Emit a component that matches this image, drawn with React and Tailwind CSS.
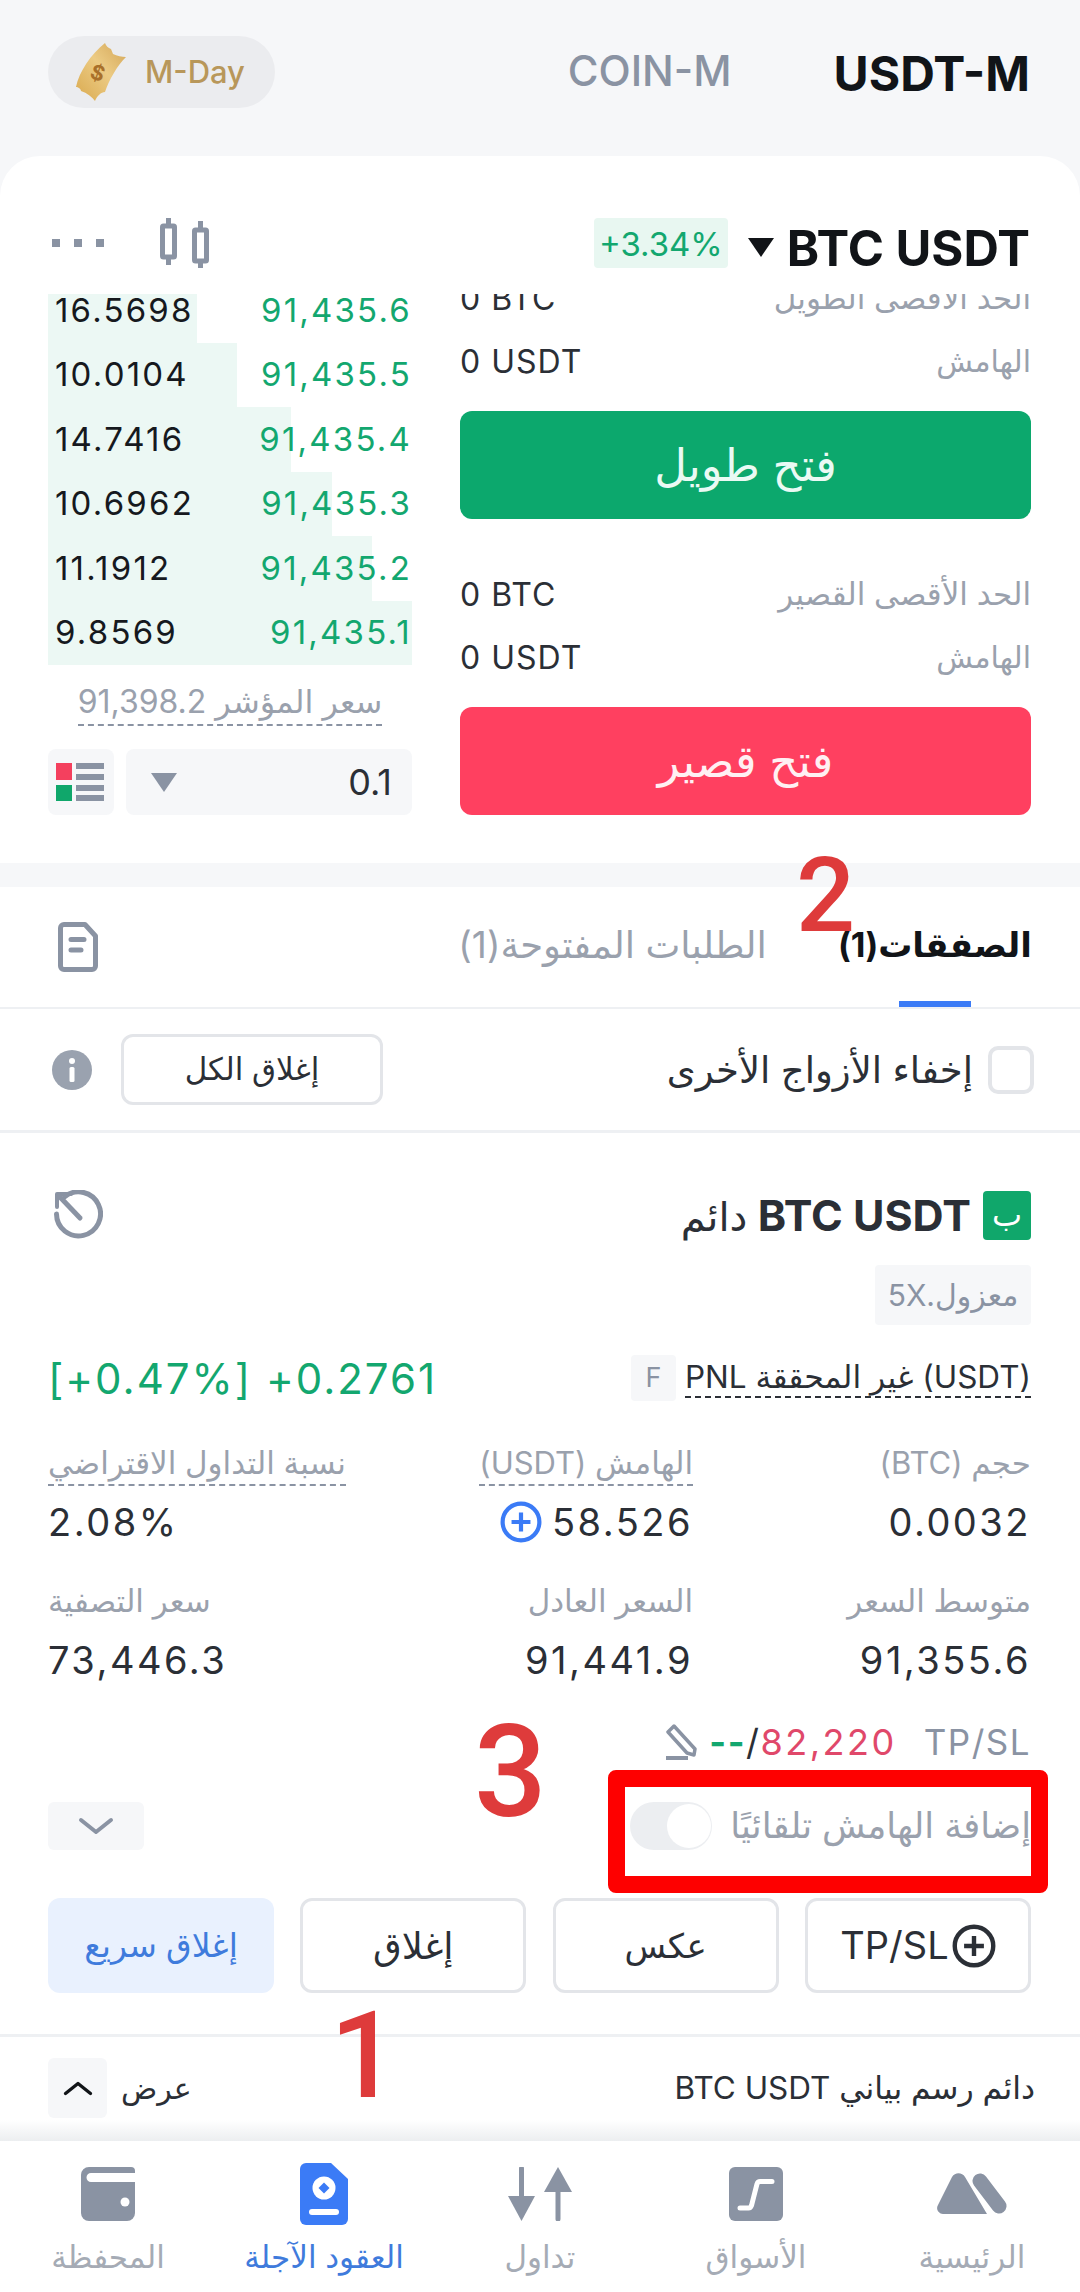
import React from "react";

const GRAY = "#8a93a3";

const asks = [
  { qty: "16.5698", price: "91,435.6", bar: 149 },
  { qty: "10.0104", price: "91,435.5", bar: 189 },
  { qty: "14.7416", price: "91,435.4", bar: 243 },
  { qty: "10.6962", price: "91,435.3", bar: 284 },
  { qty: "11.1912", price: "91,435.2", bar: 324 },
  { qty: "9.8569", price: "91,435.1", bar: 364 },
];

const Ticket = () => (
  <svg width="52" height="60" viewBox="0 0 52 60" className="shrink-0">
    <defs>
      <linearGradient id="gold" x1="0" y1="1" x2="1" y2="0">
        <stop offset="0" stopColor="#d9a94e" />
        <stop offset="0.55" stopColor="#eccb84" />
        <stop offset="1" stopColor="#d3a556" />
      </linearGradient>
    </defs>
    <path d="M30 1 C31 4 33 6 36 7 L38 12 C42 14 47 15 51 15 C42 24 34 38 30 50 C26 50 22 54 20 59 C17 55 12 51 6 49 C6 47 3 45 1 45 C4 30 16 12 30 1Z" fill="url(#gold)" />
    <text x="16" y="38" fontSize="21" fontWeight="700" fill="#a9702a" transform="rotate(20 22 30)" fontFamily="Inter">$</text>
  </svg>
);

const Candles = () => (
  <svg width="52" height="50" viewBox="0 0 52 50" fill="none" stroke={GRAY} strokeWidth="5">
    <rect x="3.5" y="8" width="12" height="31" rx="1" />
    <rect x="35.5" y="12" width="12" height="31" rx="1" />
    <path d="M9.5 0V8M9.5 39V47M41.5 3V12M41.5 43V50" />
  </svg>
);

const DepthIcon = () => (
  <svg width="50" height="38" viewBox="0 0 50 38">
    <rect x="0" y="0" width="16" height="17" fill="#f4405e" />
    <rect x="0" y="22" width="16" height="16" fill="#10a76b" />
    <rect x="20" y="0" width="28" height="6" fill={GRAY} />
    <rect x="20" y="11" width="28" height="6" fill={GRAY} />
    <rect x="20" y="22" width="28" height="6" fill={GRAY} />
    <rect x="20" y="32" width="28" height="6" fill={GRAY} />
  </svg>
);

const DocIcon = () => (
  <svg width="40" height="50" viewBox="0 0 40 50" fill="none">
    <path d="M6 2.5H27L37.5 14V44A3.5 3.5 0 0 1 34 47.5H6A3.5 3.5 0 0 1 2.500 44V6A3.5 3.5 0 0 1 6 2.500Z" stroke={GRAY} strokeWidth="5" strokeLinejoin="round" />
    <path d="M13 17.500H26M13 28H23" stroke={GRAY} strokeWidth="5" strokeLinecap="round" />
  </svg>
);

const InfoIcon = () => (
  <svg width="40" height="40" viewBox="0 0 40 40">
    <circle cx="20" cy="20" r="20" fill="#9aa2af" />
    <circle cx="20" cy="11" r="3" fill="#fff" />
    <rect x="17.500" y="17" width="5" height="15" rx="1.500" fill="#fff" />
  </svg>
);

const HistoryIcon = () => (
  <svg width="50" height="50" viewBox="0 0 50 50" fill="none" stroke={GRAY} strokeWidth="5">
    <path d="M12 6.500A22 22 0 1 1 3.500 24" strokeLinecap="round" />
    <path d="M4 4H18M4 4V17" strokeWidth="4" strokeLinecap="round" />
    <path d="M6 6L27 28" strokeLinecap="round" />
  </svg>
);

const PlusCircle = ({ color, size }) => (
  <svg width={size} height={size} viewBox="0 0 40 40" fill="none" className="shrink-0">
    <circle cx="20" cy="20" r="17.500" stroke={color} strokeWidth="4" />
    <path d="M20 11V29M11 20H29" stroke={color} strokeWidth="4" />
  </svg>
);

const Pencil = () => (
  <svg width="36" height="36" viewBox="0 0 36 36" fill="none" stroke={GRAY} strokeWidth="3.500">
    <path d="M9 2L30 25L29 31L22 29L3 8Z" strokeLinejoin="round" />
    <path d="M1 34H23" strokeWidth="4" />
  </svg>
);

const Chevron = ({ up, color, width }) => (
  <svg width={width} height={width / 2} viewBox="0 0 36 18" fill="none" stroke={color} strokeWidth="4" strokeLinecap="round" strokeLinejoin="round">
    <path d={up ? "M3 15L18 3L33 15" : "M3 3L18 15L33 3"} />
  </svg>
);

const WalletIcon = () => (
  <svg width="54" height="54" viewBox="0 0 54 54">
    <path d="M8 0H50A4 4 0 0 1 54 4V46A8 8 0 0 1 46 54H8A8 8 0 0 1 0 46V8A8 8 0 0 1 8 0Z" fill={GRAY} />
    <path d="M10 6H54V15H10A4.500 4.500 0 0 1 10 6Z" fill="#fff" />
    <circle cx="44" cy="35" r="4.500" fill="#fff" />
  </svg>
);

const FuturesIcon = () => (
  <svg width="48" height="62" viewBox="0 0 48 62">
    <path d="M6 0H31L48 16V56A6 6 0 0 1 42 62H6A6 6 0 0 1 0 56V6A6 6 0 0 1 6 0Z" fill="#3b7bf6" />
    <circle cx="24" cy="25" r="11.500" fill="#fff" />
    <path d="M24 19.500L29.500 25L24 30.500L18.500 25Z" fill="#3b7bf6" />
    <rect x="9" y="46" width="30" height="6" rx="3" fill="#fff" />
  </svg>
);

const TradeIcon = () => (
  <svg width="64" height="54" viewBox="0 0 64 54" fill={GRAY}>
    <path d="M13.500 1.500V30" stroke={GRAY} strokeWidth="5" strokeLinecap="round" />
    <path d="M0 29H27L13.500 54Z" />
    <path d="M50 52V24" stroke={GRAY} strokeWidth="5" strokeLinecap="round" />
    <path d="M36 25H64L50 0Z" />
  </svg>
);

const MarketsIcon = () => (
  <svg width="54" height="54" viewBox="0 0 54 54">
    <rect width="54" height="54" rx="6" fill={GRAY} />
    <path d="M11 41H19.500C21 41 22 40 22.500 38.500L28 17C28.500 15.500 29.500 14.500 31 14.500H43" fill="none" stroke="#fff" strokeWidth="5" strokeLinecap="round" />
  </svg>
);

const HomeIcon = () => (
  <svg width="70" height="42" viewBox="0 0 70 42">
    <path d="M15 4C18 -1 25 -1 28 4L50 41H6C1.500 41 -1.500 36 1 32Z" fill={GRAY} />
    <path d="M43 8L62 33" fill="none" stroke={GRAY} strokeWidth="15" strokeLinecap="round" />
  </svg>
);

const StatLabel = ({ children, dashed, align }) => (
  <div className={`h-[46px] flex ${align}`}>
    <span dir="rtl" className={`text-[31px] leading-[42px] h-[44px] text-[#9aa1ad] whitespace-nowrap ${dashed ? "border-b-2 border-dashed border-[#8a93a3]" : ""}`}>
      {children}
    </span>
  </div>
);

const StatValue = ({ children, align }) => (
  <div className={`h-[68px] flex items-center gap-[10px] text-[38px] tracking-[2.5px] text-[#2b2f36] ${align}`}>
    {children}
  </div>
);

const ActionButton = ({ children, className }) => (
  <div className={`h-[95px] w-[226px] rounded-[12px] flex items-center justify-center ${className}`}>
    {children}
  </div>
);

const NavItem = ({ icon, label, active }) => (
  <div className="flex flex-col items-center">
    <div className="h-[62px] flex items-center justify-center">{icon}</div>
    <span className={`mt-[10px] text-[31px] leading-[44px] whitespace-nowrap ${active ? "text-[#3f7bdc]" : "text-[#a5abb5]"}`}>
      {label}
    </span>
  </div>
);

export default function App() {
  return (
    <div className="relative w-[1080px] h-[2292px] overflow-hidden bg-white font-['Inter','DejaVu_Sans',sans-serif]">
      <div className="bg-[#f6f7f9]">
        {/* top tabs */}
        <div className="h-[156px] pt-[36px] pl-[48px] pr-[50px] flex items-start justify-between">
          <div className="w-[227px] h-[72px] rounded-full bg-[#ebecef] pl-[27px] flex items-center gap-[18px]">
            <Ticket />
            <span className="text-[31px] font-medium text-[#b8975a]">M-Day</span>
          </div>
          <div className="h-[68px] flex items-center gap-[102px]">
            <span className="text-[42px] font-medium text-[#8a93a3]">COIN-M</span>
            <span className="mt-[8px] text-[48px] font-bold text-[#111418]">USDT-M</span>
          </div>
        </div>

        <div className="h-[707px] bg-white rounded-t-[40px]">
          {/* pair header */}
          <div className="h-[138px] pt-[62px] pl-[52px] pr-[50px] flex items-start justify-between">
            <div className="flex items-center gap-[55px] h-[50px]">
              <div className="flex gap-[14px]">
                <div className="w-[8px] h-[8px] bg-[#8a93a3]" />
                <div className="w-[8px] h-[8px] bg-[#8a93a3]" />
                <div className="w-[8px] h-[8px] bg-[#8a93a3]" />
              </div>
              <Candles />
            </div>
            <div className="flex items-center h-[50px]">
              <div className="w-[134px] h-[50px] pt-[4px] rounded-[4px] bg-[#e8f7f1] flex items-center justify-center text-[33px] text-[#13a76f]">+3.34%</div>
              <div className="mt-[8px] ml-[20px] w-0 h-0 border-x-[13px] border-x-transparent border-t-[19px] border-t-[#111418]" />
              <span className="mt-[12px] ml-[13px] text-[49px] font-bold text-[#111418] whitespace-nowrap">BTC USDT</span>
            </div>
          </div>

          <div className="pl-[48px] pr-[49px] flex justify-between">
            {/* order book */}
            <div className="w-[364px]">
              <div className="h-[371px] overflow-hidden">
                <div className="-mt-[16px]">
                  {asks.map((row) => (
                    <div
                      key={row.price}
                      className="h-[64.5px] flex items-center justify-between pl-[7px] text-[33px] tracking-[2.2px]"
                      style={{ background: `linear-gradient(90deg,#ecf8f4 ${row.bar}px,transparent ${row.bar}px)` }}
                    >
                      <span className="text-[#16191e]">{row.qty}</span>
                      <span className="text-[#13a76f]">{row.price}</span>
                    </div>
                  ))}
                </div>
              </div>
              <div className="h-[84px] pt-[15px] flex justify-center items-start">
                <span dir="rtl" className="text-[32px] leading-[44px] h-[46px] tracking-[1px] text-[#9aa1ad] whitespace-nowrap border-b-2 border-dashed border-[#8a93a3]">
                  سعر المؤشر 91,398.2
                </span>
              </div>
              <div className="h-[66px] flex gap-[12px]">
                <div className="w-[66px] rounded-[8px] bg-[#f6f7f9] flex items-center justify-center">
                  <DepthIcon />
                </div>
                <div className="flex-1 rounded-[8px] bg-[#f6f7f9] pl-[25px] pr-[20px] flex items-center justify-between">
                  <div className="w-0 h-0 border-x-[13px] border-x-transparent border-t-[19px] border-t-[#8a93a3]" />
                  <span className="text-[36px] text-[#2b2f36]">0.1</span>
                </div>
              </div>
            </div>

            {/* open long / short */}
            <div className="w-[571px] h-[521px] overflow-hidden">
              <div className="-mt-[27px]">
                <div className="h-[63px] flex items-center justify-between">
                  <span className="text-[32px] tracking-[1px] text-[#2b2f36]">0 BTC</span>
                  <span dir="rtl" className="text-[31px] text-[#9aa1ad]">الحد الأقصى الطويل</span>
                </div>
                <div className="h-[63px] flex items-center justify-between">
                  <span className="text-[32px] tracking-[1px] text-[#2b2f36]">0 USDT</span>
                  <span dir="rtl" className="text-[30px] text-[#9aa1ad]">الهامش</span>
                </div>
                <div className="mt-[18px] h-[108px] rounded-[12px] bg-[#0ca86d] flex items-center justify-center text-[45px] text-[#eafaf4]">فتح طويل</div>
                <div className="mt-[44px] h-[63px] flex items-center justify-between">
                  <span className="text-[32px] tracking-[1px] text-[#2b2f36]">0 BTC</span>
                  <span dir="rtl" className="text-[31px] text-[#9aa1ad]">الحد الأقصى القصير</span>
                </div>
                <div className="h-[63px] flex items-center justify-between">
                  <span className="text-[32px] tracking-[1px] text-[#2b2f36]">0 USDT</span>
                  <span dir="rtl" className="text-[30px] text-[#9aa1ad]">الهامش</span>
                </div>
                <div className="mt-[18px] h-[108px] rounded-[12px] bg-[#ff4060] flex items-center justify-center text-[45px] text-[#fff0f3]">فتح قصير</div>
              </div>
            </div>
          </div>
        </div>

        <div className="h-[24px]" />
      </div>

      {/* positions tabs */}
      <div className="h-[122px] pl-[58px] pr-[48px] flex justify-between border-b-2 border-[#eef0f3]">
        <div className="pt-[35px]">
          <DocIcon />
        </div>
        <div className="flex gap-[71px]">
          <div dir="rtl" className="pt-[32px] text-[37px] leading-[52px] text-[#9aa1ad] whitespace-nowrap">الطلبات المفتوحة(1)</div>
          <div className="flex flex-col items-center justify-between">
            <div dir="rtl" className="pt-[32px] text-[34px] leading-[52px] font-bold text-[#111418] whitespace-nowrap">الصفقات(1)</div>
            <div className="w-[72px] h-[6px] bg-[#3b7bf6]" />
          </div>
        </div>
      </div>

      <div className="h-[124px] pl-[52px] pr-[46px] flex items-center justify-between border-b-[3px] border-[#eef0f3]">
        <div className="flex items-center gap-[29px]">
          <InfoIcon />
          <div className="w-[262px] h-[71px] rounded-[12px] border-[3px] border-[#e3e5e9] flex items-center justify-center text-[31px] text-[#2b2f36]">إغلاق الكل</div>
        </div>
        <div className="flex items-center gap-[15px]">
          <span dir="rtl" className="text-[37px] text-[#2b2f36] whitespace-nowrap">إخفاء الأزواج الأخرى</span>
          <div className="w-[46px] h-[48px] rounded-[10px] border-[4px] border-[#e3e5e9]" />
        </div>
      </div>

      {/* position card */}
      <div className="pl-[48px] pr-[49px]">
        <div className="pt-[57px] h-[107px] pl-[5px] flex justify-between">
          <HistoryIcon />
          <div className="flex items-center gap-[12px] h-[50px]">
            <span dir="rtl" className="text-[43px] font-bold text-[#2b2f36] whitespace-nowrap">BTC USDT <span className="font-normal text-[40px]">دائم</span></span>
            <div className="w-[48px] h-[49px] rounded-[4px] bg-[#10a76b] flex items-center justify-center text-[32px] text-white">ب</div>
          </div>
        </div>

        <div className="mt-[25px] flex justify-end">
          <div dir="rtl" className="w-[156px] h-[60px] rounded-[4px] bg-[#f6f7f9] flex items-center justify-center text-[30px] text-[#8a93a3] whitespace-nowrap">معزول.5X</div>
        </div>

        <div className="mt-[30px] h-[46px] flex items-center justify-between">
          <span className="text-[42px] tracking-[2px] text-[#13a76f] whitespace-nowrap">[+0.47%] +0.2761</span>
          <div className="flex items-center gap-[9px]">
            <div className="w-[45px] h-[46px] rounded-[4px] bg-[#f6f7f9] flex items-center justify-center text-[27px] text-[#8a93a3]">F</div>
            <span dir="rtl" className="text-[31.500px] leading-[38px] h-[40px] text-[#2b2f36] whitespace-nowrap border-b-2 border-dashed border-[#2b2f36]">(USDT) غير المحققة PNL</span>
          </div>
        </div>

        <div className="mt-[41px] grid grid-cols-[305px_340px_338px]">
          <StatLabel dashed align="justify-start">نسبة التداول الاقتراضي</StatLabel>
          <StatLabel dashed align="justify-end">الهامش (USDT)</StatLabel>
          <StatLabel align="justify-end">حجم (BTC)</StatLabel>
          <StatValue align="justify-start">2.08%</StatValue>
          <StatValue align="justify-end">
            <PlusCircle color="#3b7bf6" size={42} />
            58.526
          </StatValue>
          <StatValue align="justify-end">0.0032</StatValue>
        </div>
        <div className="mt-[24px] grid grid-cols-[305px_340px_338px]">
          <StatLabel align="justify-start">سعر التصفية</StatLabel>
          <StatLabel align="justify-end">السعر العادل</StatLabel>
          <StatLabel align="justify-end">متوسط السعر</StatLabel>
          <StatValue align="justify-start">73,446.3</StatValue>
          <StatValue align="justify-end">91,441.9</StatValue>
          <StatValue align="justify-end">91,355.6</StatValue>
        </div>

        <div className="mt-[24px] h-[48px] flex items-center justify-end tracking-[1.500px] whitespace-nowrap">
          <Pencil />
          <span className="ml-[8px] text-[36px] font-bold text-[#13a76f]">--</span>
          <span className="text-[36px] text-[#2b2f36]">/</span>
          <span className="mr-[4px] text-[36px] tracking-[2.500px] text-[#e0486a]">82,220</span>
          <span className="ml-[23px] text-[35px] text-[#8a93a3]">TP/SL</span>
        </div>

        <div className="mt-[36px] h-[48px] flex items-center justify-between">
          <div className="w-[96px] h-[48px] rounded-[6px] bg-[#f6f7f9] flex items-center justify-center">
            <Chevron color={GRAY} width={36} />
          </div>
          <div className="flex items-center gap-[18px]">
            <div className="w-[82px] h-[48px] rounded-full bg-[#eceef1] flex justify-end items-center">
              <div className="w-[44px] h-[44px] rounded-full bg-white mr-[1px]" />
            </div>
            <span dir="rtl" className="text-[35.500px] text-[#9aa1ad] whitespace-nowrap">إضافة الهامش تلقائيًا</span>
          </div>
        </div>

        <div className="mt-[48px] flex justify-between">
          <ActionButton className="bg-[#e9f1fe] text-[#3f7bdc] text-[33px]">إغلاق سريع</ActionButton>
          <ActionButton className="border-[3px] border-[#e3e5e9] text-[#2b2f36] text-[37px]">إغلاق</ActionButton>
          <ActionButton className="border-[3px] border-[#e3e5e9] text-[#2b2f36] text-[34px]">عكس</ActionButton>
          <ActionButton className="border-[3px] border-[#e3e5e9] text-[#2b2f36] gap-[3px]">
            <span className="text-[38px]">TP/SL</span>
            <PlusCircle color="#2b2f36" size={44} />
          </ActionButton>
        </div>
      </div>

      {/* chart bar */}
      <div className="mt-[41px] h-[86px] pt-[21px] pl-[48px] pr-[45px] flex items-start justify-between border-t-[3px] border-[#eef0f3]">
        <div className="flex items-center gap-[14px] h-[60px]">
          <div className="w-[59px] h-[60px] rounded-[6px] bg-[#f6f7f9] flex items-center justify-center">
            <Chevron up color="#111418" width={30} />
          </div>
          <span className="text-[30px] text-[#2b2f36]">عرض</span>
        </div>
        <span dir="rtl" className="h-[60px] flex items-center text-[31.500px] text-[#2b2f36] whitespace-nowrap">دائم رسم بياني BTC USDT</span>
      </div>
      <div className="h-[21px] bg-gradient-to-b from-white to-[#eceef0]" />

      {/* bottom nav */}
      <div className="h-[151px] pt-[22px] grid grid-cols-5 bg-white">
        <NavItem icon={<WalletIcon />} label="المحفظة" />
        <NavItem active icon={<FuturesIcon />} label="العقود الآجلة" />
        <NavItem icon={<TradeIcon />} label="تداول" />
        <NavItem icon={<MarketsIcon />} label="الأسواق" />
        <NavItem icon={<HomeIcon />} label="الرئيسية" />
      </div>

      {/* red annotations drawn over the screenshot */}
      <div className="absolute left-[608px] top-[1770px] w-[440px] h-[123px] rounded-[8px] border-[17px] border-[#fe0000]" />
      <span className="absolute left-[796px] top-[836px] text-[104px] leading-[120px] font-medium font-['Roboto'] text-[#de3b3b]">2</span>
      <span className="absolute left-[474px] top-[1697px] text-[128px] leading-[150px] font-medium font-['Roboto'] text-[#de3b3b]">3</span>
      <span className="absolute left-[330px] top-[1986px] text-[120px] leading-[140px] font-medium font-['Roboto'] text-[#de3b3b]">1</span>
    </div>
  );
}
